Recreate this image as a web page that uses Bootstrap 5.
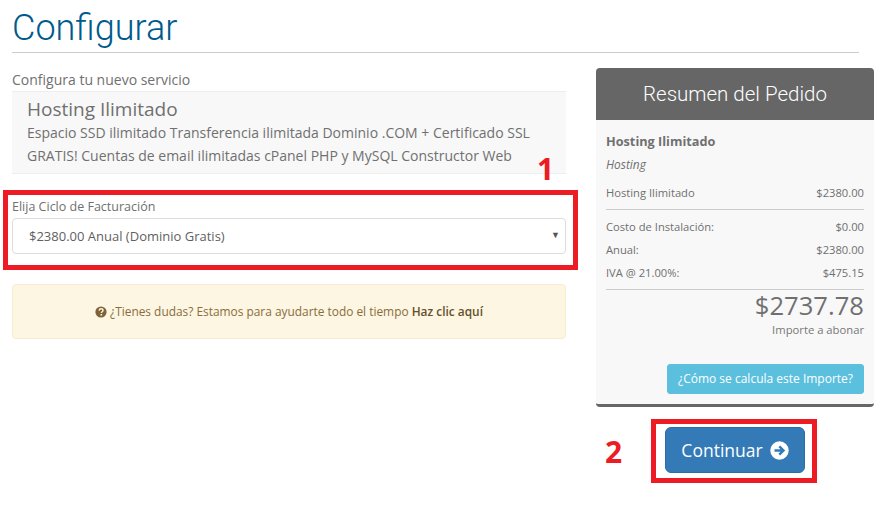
<!DOCTYPE html>
<html lang="es">
<head>
<meta charset="utf-8">
<title>Configurar</title>
<link href="https://cdn.jsdelivr.net/npm/bootstrap@5.3.0/dist/css/bootstrap.min.css" rel="stylesheet">
<style>
html,body{height:509px;overflow:hidden}
body{font-family:"Open Sans","Liberation Sans",sans-serif;font-size:14px;color:#707070;background:#fff;position:relative}
.page-wrap{padding:0 35px 0 12px;width:894px}
.page-title{font-family:Roboto,"Liberation Sans",sans-serif;font-weight:300;font-size:36px;line-height:40px;color:#005a8c;margin:0;padding:8px 0 4px;border-bottom:1px solid #ccc;height:53px}
.main-row{display:flex;margin-top:15px;width:862px}
.left-col{width:554px;flex:none}
.right-col{width:278px;flex:none;margin-left:30px}
.intro{line-height:20px;margin-top:2px;height:21px}
.prod-box{background:#f8f8f8;border-bottom:1px solid #eee;border-top:1px solid #eee;padding:5px 15px 4px;height:83px}
.prod-name{font-size:19px;line-height:24px}
.prod-desc{line-height:23px}
.cycle-label{font-size:12.5px;line-height:18px;margin-top:24px;margin-bottom:2px;display:block}
.cycle-select{height:36px;border:1px solid #ddd;border-radius:4px;background:#fff;display:flex;align-items:center;justify-content:space-between;padding:2px 5px 0 16px;color:#5f5f5f;font-size:13px}
.caret-mark{font-size:9px;color:#555;margin-bottom:5px}
.help-box{height:55px;margin-top:30px;background:#fcf6e3;border:1px solid #faebcc;border-radius:4px;color:#8a6d3b;font-size:11.9px;display:flex;align-items:center;justify-content:center;gap:3px}
.help-box strong{font-weight:600;color:#66512c}
.sum-card{background:#f8f8f8;border-bottom:3px solid #666;border-radius:4px;height:339px}
.sum-head{background:#666;color:#fff;font-family:Roboto,"Liberation Sans",sans-serif;font-weight:300;font-size:20.5px;line-height:52px;height:52px;text-align:center;border-radius:4px 4px 0 0}
.sum-body{padding:0 10px;font-size:11.2px}
.sum-title{font-weight:700;font-size:12.7px;line-height:18px;padding-top:12px;height:30px}
.sum-cat{font-style:italic;font-size:11.9px;line-height:18px;margin-top:5px}
.sum-line{display:flex;justify-content:space-between;line-height:18px;margin-top:5px}
.sum-line-first{margin-top:11px}
.sum-line-after{margin-top:8px}
.sum-rule{border-top:1px solid #ccc;margin:7px 0 0;opacity:1}
.sum-total{font-size:25.6px;line-height:30px;text-align:right;margin-top:1px}
.sum-note{text-align:right;font-size:11.25px;line-height:16px;margin-top:1px;color:#777}
.calc-btn{background:#5bc0de;border:1px solid #5bc0de;color:#fff;font-size:12px;height:30px;width:197px;border-radius:3px;display:flex;align-items:center;justify-content:center;padding:0;margin-left:auto;margin-top:26px}
.go-btn{display:flex;align-items:center;justify-content:center;gap:7px;background:#337ab7;border:1px solid #2e6da4;color:#fff;font-size:17.5px;width:140px;height:46px;border-radius:6px;padding:0;margin:20px 0 0 69px}
.mark-box{position:absolute;border:5px solid #ed1c24}
.mark-digit{position:absolute;color:#ed1c24;font-weight:700;font-size:30px;line-height:30px;font-family:"Open Sans","Liberation Sans",sans-serif}
</style>
</head>
<body>
<div class="page-wrap">
  <h1 class="page-title">Configurar</h1>
  <div class="main-row">
    <div class="left-col">
      <div class="intro">Configura tu nuevo servicio</div>
      <div class="prod-box">
        <div class="prod-name">Hosting Ilimitado</div>
        <div class="prod-desc">Espacio SSD ilimitado Transferencia ilimitada Dominio .COM + Certificado SSL GRATIS! Cuentas de email ilimitadas cPanel PHP y MySQL Constructor Web</div>
      </div>
      <label class="cycle-label">Elija Ciclo de Facturación</label>
      <div class="cycle-select"><span>$2380.00 Anual (Dominio Gratis)</span><span class="caret-mark">▼</span></div>
      <div class="help-box">
        <svg width="12" height="12" viewBox="0 0 12 12" aria-hidden="true"><circle cx="6" cy="6" r="5.6" fill="#7d6337"/><path d="M4.1 4.6c.1-1.2 1-1.8 2-1.8 1.1 0 1.9.7 1.9 1.6 0 1.4-1.6 1.3-1.6 2.5" fill="none" stroke="#fcf6e3" stroke-width="1.4"/><rect x="5.5" y="8" width="1.6" height="1.5" fill="#fcf6e3"/></svg>
        <span>¿Tienes dudas? Estamos para ayudarte todo el tiempo <strong>Haz clic aquí</strong></span>
      </div>
    </div>
    <div class="right-col">
      <div class="sum-card">
        <div class="sum-head">Resumen del Pedido</div>
        <div class="sum-body">
          <div class="sum-title">Hosting Ilimitado</div>
          <div class="sum-cat">Hosting</div>
          <div class="sum-line sum-line-first"><span>Hosting Ilimitado</span><span>$2380.00</span></div>
          <hr class="sum-rule">
          <div class="sum-line sum-line-after"><span>Costo de Instalación:</span><span>$0.00</span></div>
          <div class="sum-line"><span>Anual:</span><span>$2380.00</span></div>
          <div class="sum-line"><span>IVA @ 21.00%:</span><span>$475.15</span></div>
          <hr class="sum-rule">
          <div class="sum-total">$2737.78</div>
          <div class="sum-note">Importe a abonar</div>
          <button type="button" class="btn calc-btn">¿Cómo se calcula este Importe?</button>
        </div>
      </div>
      <button type="button" class="btn go-btn">Continuar
        <svg width="19" height="19" viewBox="0 0 19 19" aria-hidden="true"><circle cx="9.5" cy="9.5" r="9.2" fill="#fff"/><path d="M4.5 9.5h8.5M9.3 5.3l4.2 4.2-4.2 4.2" fill="none" stroke="#337ab7" stroke-width="2.4"/></svg>
      </button>
    </div>
  </div>
</div>
<div class="mark-box" style="left:3px;top:190px;width:575px;height:80px"></div>
<div class="mark-box" style="left:651px;top:419px;width:166px;height:64px"></div>
<div class="mark-digit" style="left:537px;top:154px">1</div>
<div class="mark-digit" style="left:605px;top:437px">2</div>
</body>
</html>
